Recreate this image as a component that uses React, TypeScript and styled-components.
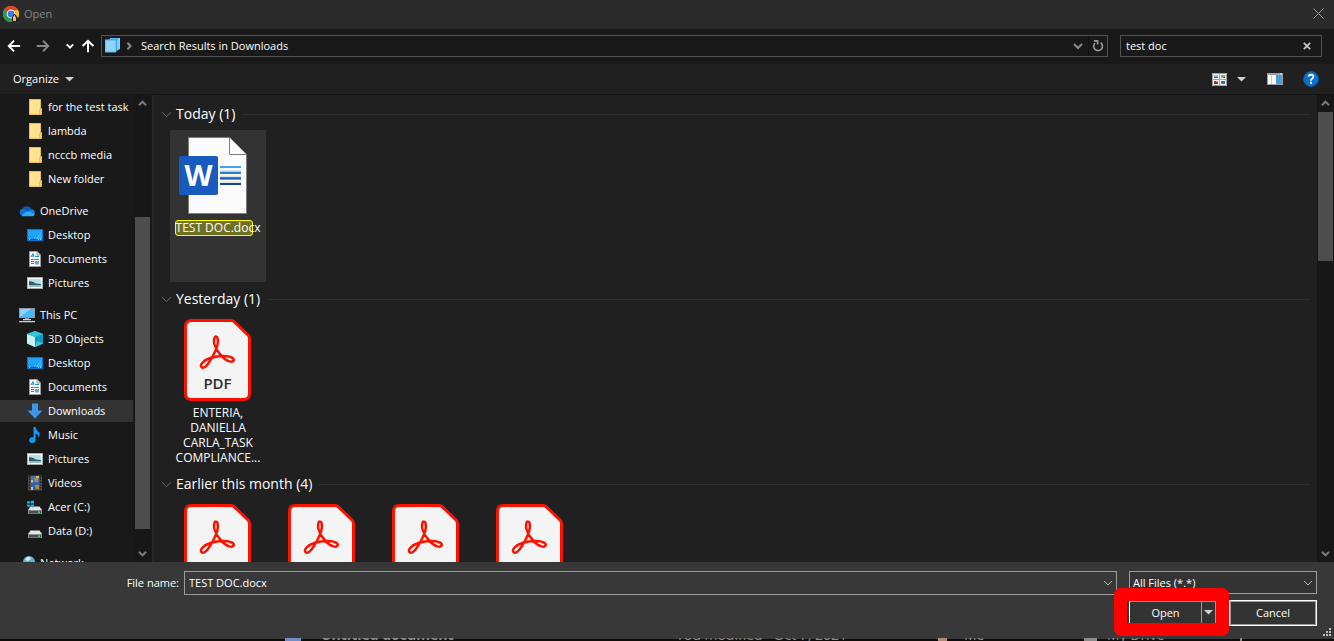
import React from "react";
import styled, { createGlobalStyle } from "styled-components";

const GlobalStyle = createGlobalStyle`
  *, *::before, *::after { box-sizing: border-box; }
  html, body { margin: 0; padding: 0; background: #0e0e0e; }
  body, button, input, select {
    font-family: "Open Sans", "Noto Sans", sans-serif;
    font-size: 11px;
    line-height: 16px;
    color: #ffffff;
  }
  button { margin: 0; padding: 0; border: 0; background: none; cursor: pointer; }
  input, select { margin: 0; border: 0; background: none; outline: none; min-width: 0; }
  svg { display: block; flex: none; }
`;

/* ---------- window frame ---------- */

const Dialog = styled.main`
  display: flex;
  flex-direction: column;
  height: 100vh;
  overflow: hidden;
`;

const TitleBar = styled.header`
  display: flex;
  align-items: center;
  flex: none;
  gap: 5px;
  height: 29px;
  padding: 0 10px 2px 3px;
  background: #2b2b2b;
`;

const Title = styled.h1`
  flex: 1;
  margin: 0;
  font-size: 11px;
  font-weight: 400;
  color: #858585;
`;

const IconButton = styled.button<{ $width?: number }>`
  display: flex;
  align-items: center;
  justify-content: center;
  flex: none;
  width: ${(p) => p.$width ?? 16}px;
  height: 20px;
`;

const NavBar = styled.nav`
  display: flex;
  align-items: center;
  flex: none;
  height: 35px;
  padding: 0 12px 2px 6px;
  background: #191919;
`;

const NavButtons = styled.div`
  display: flex;
  align-items: center;
  justify-content: space-between;
  width: 89px;
  margin-right: 6px;
`;

const FieldBox = styled.div<{ $width?: string }>`
  display: flex;
  align-items: center;
  flex: ${(p) => (p.$width ? `0 0 ${p.$width}` : "1")};
  min-width: 0;
  height: 22px;
  border: 1px solid #535353;
`;

const AddressBox = styled(FieldBox)`
  margin-right: 12px;
  padding: 0 0 0 3px;
`;

const Crumb = styled.a`
  flex: 1;
  margin-left: 8px;
  color: #ffffff;
  text-decoration: none;
`;

const CrumbArrow = styled.span`
  display: flex;
  margin-left: 5px;
`;

const FieldDivider = styled.span`
  width: 1px;
  height: 20px;
  background: #121212;
`;

const SearchInput = styled.input`
  flex: 1;
  padding: 0 0 0 5px;
`;

const Toolbar = styled.div`
  display: flex;
  align-items: center;
  flex: none;
  height: 31px;
  padding: 0 15px 0 13px;
  background: #202020;
  border-bottom: 1px solid #151515;
`;

const OrganizeButton = styled.button`
  display: flex;
  align-items: center;
  gap: 6px;
  margin-right: auto;
`;

const ToolbarGroup = styled.div<{ $after?: number }>`
  display: flex;
  align-items: center;
  gap: 6px;
  margin-right: ${(p) => p.$after ?? 0}px;
`;

const Body = styled.div`
  display: flex;
  flex: 1;
  min-height: 0;
`;

/* ---------- navigation tree ---------- */

const Sidebar = styled.aside`
  display: flex;
  flex: none;
  width: 154px;
  padding-right: 1px;
  background: #191919;
  border-right: 2px solid #262626;
`;

const Tree = styled.div`
  flex: 1;
  overflow: hidden;
`;

const TreeSection = styled.ul`
  margin: 0 0 8px;
  padding: 0;
  list-style: none;
`;

const TreeItem = styled.li`
  padding: 1px 0;
`;

const TreeLink = styled.a<{ $level: number; $active?: boolean }>`
  display: flex;
  align-items: center;
  gap: 5px;
  height: 22px;
  margin-right: 1px;
  padding-left: ${(p) => 19 + p.$level * 8}px;
  color: #ffffff;
  text-decoration: none;
  white-space: nowrap;
  background: ${(p) => (p.$active ? "#333333" : "transparent")};
`;

/* ---------- scroll bars ---------- */

const ScrollTrack = styled.div`
  display: flex;
  flex-direction: column;
  flex: none;
  width: 17px;
  padding: 0 1px;
  background: #171717;
`;

const ScrollArrow = styled.button`
  display: flex;
  align-items: center;
  justify-content: center;
  flex: none;
  height: 17px;
`;

const ScrollSpace = styled.div<{ $share: number }>`
  flex: ${(p) => p.$share} 0 0;
`;

const ScrollThumb = styled(ScrollSpace)`
  background: #4d4d4d;
`;

/* ---------- file list ---------- */

const Content = styled.section`
  flex: 1;
  min-width: 0;
  overflow: hidden;
  padding: 3px 7px 0;
  background: #202020;
`;

const Group = styled.section`
  margin-bottom: 1px;
`;

const GroupHeader = styled.h2`
  display: flex;
  align-items: center;
  gap: 4px;
  height: 32px;
  margin: 0;
  font-size: 14px;
  line-height: 20px;
  font-weight: 400;
  white-space: nowrap;

  &::after {
    content: "";
    flex: 1;
    height: 1px;
    margin-left: 3px;
    background: #2e2e2e;
  }
`;

const Tiles = styled.div`
  display: flex;
  gap: 8px;
  padding-left: 9px;
`;

const Tile = styled.button<{ $selected?: boolean }>`
  position: relative;
  display: flex;
  flex-direction: column;
  align-items: center;
  flex: none;
  width: 96px;
  height: 152px;
  padding-top: 4px;
  background: ${(p) => (p.$selected ? "#333333" : "transparent")};
`;

const TileLabel = styled.span`
  position: relative;
  width: 88px;
  font-size: 12px;
  line-height: 15px;
  text-align: center;
`;

const NameMark = styled.span`
  position: absolute;
  left: 5px;
  top: 90px;
  width: 78px;
  height: 16px;
  border: 1px solid #ffff00;
  border-radius: 3px;
  background: #707022;
`;

/* ---------- footer ---------- */

const Footer = styled.footer`
  display: grid;
  grid-template-columns: 184px 1fr 188px;
  grid-template-rows: 24px 26px;
  row-gap: 5px;
  flex: none;
  height: 76px;
  padding: 9px 17px 0 0;
  background: #383838;
  position: relative;
`;

const FileNameLabel = styled.label`
  padding: 4px 5px 0 0;
  text-align: right;
`;

const FileNameBox = styled.div`
  display: flex;
  align-items: center;
  margin-right: 12px;
  border: 1px solid #9b9b9b;
`;

const FileNameInput = styled.input`
  flex: 1;
  padding: 0 0 0 4px;
`;

const FilterBox = styled.div`
  display: grid;
  grid-template-columns: 1fr 17px;
  align-items: center;
  height: 23px;
  border: 1px solid #9b9b9b;
  background: #333333;
`;

const FilterSelect = styled.select`
  grid-area: 1 / 1 / 2 / 3;
  height: 21px;
  padding: 0 17px 0 3px;
  appearance: none;
`;

const FilterArrow = styled.span`
  grid-area: 1 / 2;
  display: flex;
  justify-content: center;
  pointer-events: none;
`;

const Actions = styled.div`
  grid-column: 3;
  display: flex;
  justify-content: space-between;
`;

const OpenSplit = styled.div`
  position: relative;
  display: flex;
  width: 87px;
  margin: 1px 0 2px;
  border: 1px solid #9b9b9b;
  border-left-color: #ffffff;
  background: #333333;
`;

const OpenButton = styled.button`
  flex: 1;
  border-right: 1px solid #9b9b9b;
`;

const CancelButton = styled.button`
  width: 88px;
  border: 1px solid #ffffff;
  outline: 1px solid #9b9b9b;
  outline-offset: -2px;
  background: #333333;
`;

const RedFrame = styled.span`
  position: absolute;
  inset: -14px -14px -13px -16px;
  border: 13px solid #ff0000;
  border-radius: 7px;
  pointer-events: none;
`;

const Grip = styled.span`
  position: absolute;
  right: 3px;
  bottom: 2px;
`;

/* ---------- page showing under the dialog ---------- */

const Underlay = styled.div`
  display: grid;
  grid-template-columns: 36px 355px 262px 26px 120px 23px 133px 1fr;
  grid-template-rows: 3px;
  align-items: end;
  flex: none;
  height: 3px;
  padding-left: 285px;
  overflow: hidden;
  font-size: 14px;
  line-height: 12px;
  white-space: nowrap;
  color: #8c8c8c;
  background: linear-gradient(#383838 1px, #0e0b0b 1px);
`;

const UnderlayChip = styled.span<{ $color: string; $size: number }>`
  width: ${(p) => p.$size}px;
  height: 3px;
  background: ${(p) => p.$color};
`;

/* ---------- icons ---------- */

const ChromeIcon = () => (
  <svg width="16" height="16" viewBox="0 0 16 16">
    <circle cx="8" cy="8" r="8" fill="#fbc116" />
    <path d="M8 8 L1.1 4 A8 8 0 0 1 14.9 4 Z" fill="#e33b2e" />
    <path d="M8 8 L1.1 4 A8 8 0 0 0 8 16 L11 9.5 Z" fill="#1f9d4d" />
    <path d="M8 4.2 H15 A8 8 0 0 1 8 16 L11.4 9.8 Z" fill="#fbc116" />
    <circle cx="8" cy="8" r="4.4" fill="#fff" />
    <circle cx="8" cy="8" r="3.4" fill="#3b7de8" />
    <path d="M8.5 16 L9 11 Q11 6 13 9 L16 14 V16 Z" fill="#2b2223" />
    <path d="M10 15 V11 L11.5 9 L13 12 V15 Z" fill="#e8b79c" />
  </svg>
);

const CloseIcon = () => (
  <svg width="11" height="11" viewBox="0 0 11 11" stroke="#9a9a9a" fill="none">
    <path d="M.5 .5 L10.5 10.5 M10.5 .5 L.5 10.5" />
  </svg>
);

const ArrowIcon = ({ dir, color }: { dir: "left" | "right" | "up"; color: string }) => {
  const turn = { left: 0, up: 90, right: 180 }[dir];
  return (
    <svg width="14" height="14" viewBox="0 0 14 14" stroke={color} strokeWidth="2" fill="none">
      <g transform={`rotate(${turn} 7 7)`}>
        <path d="M1.8 7 H13.2 M7 1.6 L1.8 7 L7 12.4" />
      </g>
    </svg>
  );
};

const Chevron = ({
  dir = "down",
  w = 8,
  color,
  stroke = 2,
}: {
  dir?: "down" | "up" | "right";
  w?: number;
  color: string;
  stroke?: number;
}) => (
  <svg width={w + 2} height={w + 2} viewBox="0 0 10 10" stroke={color} fill="none" strokeWidth={(stroke * 10) / (w + 2)}>
    <path d={{ down: "M1 3 L5 7 L9 3", up: "M1 7 L5 3 L9 7", right: "M3 1 L7 5 L3 9" }[dir]} />
  </svg>
);

const Triangle = () => (
  <svg width="9" height="5" viewBox="0 0 9 5" fill="#d0d0d0">
    <path d="M0 0 H9 L4.5 4.6 Z" />
  </svg>
);

const StackIcon = () => (
  <svg width="15" height="15" viewBox="0 0 15 15">
    <path d="M5 0 H15 V11 L13 12 V1 H5 Z" fill="#8ad6fb" />
    <path d="M3 1 H13 V12.5 H11 V2 H3 Z" fill="#249be8" />
    <path d="M5 0 H14 V11 H5 Z" fill="#5cbcf5" />
    <path d="M3 1 H12.5 V12.5 H3 Z" fill="#2f9fe6" />
    <path d="M12.5 1.5 V12 M14 .5 V11" stroke="#9addff" strokeWidth=".7" />
    <path d="M0 2 H11 V14 H0 Z" fill="#8fd5fb" stroke="#55b4ec" />
  </svg>
);

const RefreshIcon = () => (
  <svg width="12" height="12" viewBox="0 0 12 12" fill="none" stroke="#9a9a9a" strokeWidth="1.6">
    <path d="M8.6 2.6 A4.4 4.4 0 1 1 3 3" />
    <path d="M2 .9 H5.6 V4.6" />
  </svg>
);

const ClearIcon = () => (
  <svg width="8" height="8" viewBox="0 0 8 8" fill="none" stroke="#c4c4c4" strokeWidth="1.8">
    <path d="M.8 .8 L7.2 7.2 M7.2 .8 L.8 7.2" />
  </svg>
);

const ViewIcon = () => (
  <svg width="15" height="13" viewBox="0 0 15 13">
    <rect width="15" height="13" fill="#f2f2f2" />
    <path d="M.5 .5 H14.5 V12.5 H.5 Z M7.5 0 V13 M0 6.5 H15" stroke="#a5a5a5" fill="none" />
    <path d="M2 2 H6 V5 H2 Z" fill="#8ec0e8" />
    <path d="M2 4 H6 V5 H2 Z" fill="#3c6f8e" />
    <path d="M9 2 H13 V5 H9 Z" fill="#8fae9a" />
    <path d="M11 4 H13 V5 H11 Z" fill="#3f7a3a" />
    <path d="M2 8 H6 V11 H2 Z" fill="#c0281a" />
    <path d="M4 8 H6 V9 H4 Z" fill="#eaa13b" />
    <path d="M9 8 H13 V11 H9 Z" fill="#3c69a4" />
    <path d="M9 10 H13 V11 H9 Z" fill="#8a7d2a" />
  </svg>
);

const PaneIcon = () => (
  <svg width="16" height="12" viewBox="0 0 16 12">
    <rect width="16" height="12" fill="#9c9c9c" />
    <path d="M1 2 H4.5 V11 H1 Z M5 2 H9 V11 H5 Z" fill="#fff" />
    <path d="M9 2 H15 V11 H9 Z" fill="#3f9fe8" />
    <path d="M11 .5 H12 V1.5 H11 Z M13 .5 H15 V1.5 H13 Z" fill="#eee" />
  </svg>
);

const HelpIcon = () => (
  <svg width="16" height="16" viewBox="0 0 16 16">
    <circle cx="8" cy="8" r="7.5" fill="#0a6fd1" stroke="#0b559c" />
    <path d="M5.6 5.6 Q5.8 3.7 8 3.7 Q10.4 3.8 10.4 5.8 Q10.4 7 9 7.8 Q8 8.4 8 9.7" fill="none" stroke="#fff" strokeWidth="1.8" />
    <rect x="7" y="10.8" width="2" height="2" fill="#fff" />
  </svg>
);

type IconName =
  | "folder" | "cloud" | "desktop" | "document" | "picture" | "pc" | "cube"
  | "download" | "music" | "video" | "system" | "drive" | "network";

const driveShape = (
  <>
    <path d="M3.5 7.5 H12.5 L15 11 H1 Z" fill="#e6e6e6" />
    <path d="M1 11 H15 V15 H1 Z" fill="#8b8f92" />
    <path d="M2 12 H14 V14.4 H2 Z" fill="#4a4e50" />
    <rect x="11" y="12.4" width="2" height="1.6" fill="#3fe05a" />
  </>
);

const treeIcons: Record<IconName, React.ReactNode> = {
  folder: (
    <>
      <path d="M2 .5 H13.5 V15.5 H2 Z" fill="#ffe391" />
      <path d="M2.5 .5 V15.5 H14.5 V9.5 H13.5 V.5 Z" fill="none" stroke="#e9c04b" />
      <path d="M12.5 10 H14.5 V15 H12.5 Z" fill="#f7d56b" stroke="#e0b13c" strokeWidth=".6" />
    </>
  ),
  cloud: (
    <>
      <path d="M3.2 7 A4.8 4.8 0 0 1 12.4 6.4 L9 10 Z" fill="#0a5fb4" />
      <path d="M4 13 A3.4 3.4 0 1 1 4.6 5.8 L12 11 Z" fill="#1173cc" />
      <path d="M11.8 6.4 A3.4 3.4 0 0 1 15.4 11.4 L9 9.4 Z" fill="#1683d8" />
      <path d="M3 13.2 Q2.4 11.2 7.6 8.7 Q9.4 7.8 11.6 9.2 L15.6 11 Q15.6 13.2 13.2 13.2 Z" fill="#29a8ef" />
    </>
  ),
  desktop: (
    <>
      <rect x=".5" y="2.5" width="15" height="11" fill="#1ea2ff" stroke="#0a78c8" />
      <path d="M6 13 L15 4 V13 Z" fill="#2fb0ff" />
      <path d="M1 12.5 H15" stroke="#0c4d80" />
      <path d="M2 12.5 H3 M11 12.5 H12 M13 12.5 H14" stroke="#fff" />
    </>
  ),
  document: (
    <>
      <path d="M2.5 .5 H10 L13.5 4 V15.5 H2.5 Z" fill="#fafafa" stroke="#9c9c9c" />
      <path d="M10 .5 V4 H13.5" fill="#ddd" stroke="#9c9c9c" />
      <path d="M4 6 L6 2.5 L7 6 M4.5 5 H7 M8 5.5 H12" fill="none" stroke="#2b8fd6" />
      <path d="M4 8.5 H12 M4 10.5 H7 M4 12.5 H7" stroke="#2b8fd6" />
      <rect x="8" y="10" width="4" height="3.5" fill="#7c9cb8" />
    </>
  ),
  picture: (
    <>
      <rect x=".5" y="2.5" width="15" height="11" fill="#fff" stroke="#a9a9a9" />
      <rect x="2" y="4" width="12" height="8" fill="#b9dcf2" />
      <path d="M2 6 Q6 6 9 8.5 L14 9 V10.5 H2 Z" fill="#2f5f66" />
      <path d="M2 10 H14 V12 H2 Z" fill="#8fbcd0" />
    </>
  ),
  pc: (
    <>
      <rect x=".5" y="1.5" width="15" height="9" fill="#4bb8fb" stroke="#8c9aa5" />
      <path d="M1 10 L12 2 H1 Z" fill="#8bd3ff" />
      <path d="M6 11 H10 V12.4 H6 Z" fill="#7d8890" />
      <path d="M4 12.6 H12 M0 14.6 H16" stroke="#c9d3db" strokeWidth="1.4" />
    </>
  ),
  cube: (
    <>
      <path d="M8 0 L16 3 V12.6 L8 16 L0 12.6 V3 Z" fill="#25b4cf" />
      <path d="M0 3 L8 6 V16 L0 12.6 Z" fill="#c9f1f3" />
      <path d="M0 3 L8 0 L16 3 L8 6 Z" fill="#3cc7d8" />
      <path d="M8 6 L16 3 V12.6 L8 16 Z" fill="#0b9ec4" />
      <path d="M8 16 L16 12.6 L10 10 Z" fill="#35d0dc" />
    </>
  ),
  download: <path d="M5 .5 H11 V7.5 H15.5 L8 15.5 L.5 7.5 H5 Z" fill="#3b97ea" />,
  music: (
    <path d="M6.5 0 H8.6 Q9 3 11.6 5 Q13.6 7.4 11.4 11 Q11.6 7.4 8.6 6.8 V13 A3.3 2.8 -15 1 1 6.5 10.4 Z" fill="#0f9bf5" />
  ),
  video: (
    <>
      <rect x="1" y=".5" width="14" height="15" fill="#55504a" />
      <path d="M2.5 1 V15.5 M13.5 1 V15.5" stroke="#1c1c1c" strokeWidth="1.4" strokeDasharray="1.4 1.4" />
      <rect x="4" y="1" width="8" height="6.6" fill="#3c72c8" />
      <rect x="4" y="8.4" width="8" height="6.6" fill="#3463b6" />
      <path d="M7 3 H11 V7 H8 Z M8 10 H12 V14 H9 Z" fill="#b38a3c" />
      <path d="M9 1 H12 V3 H9 Z" fill="#d8c13b" />
      <path d="M4 5 H6 V7.6 H4 Z M4 12 H6 V15 H4 Z" fill="#9fc3ea" />
    </>
  ),
  system: (
    <>
      {driveShape}
      <path d="M0 2.4 L2.8 2 V4.6 H0 Z M3.6 1.9 L7 1.4 V4.6 H3.6 Z M0 5.4 H2.8 V8 L0 7.6 Z M3.6 5.4 H7 V8.6 L3.6 8.1 Z" fill="#12b4f2" />
    </>
  ),
  drive: driveShape,
  network: (
    <>
      <circle cx="10" cy="7" r="6" fill="#5fb2da" />
      <path d="M6 4 Q9 .5 12 3 Q11 6 8 6 Z" fill="#d3ecf6" />
      <path d="M0 7 H8 V12 H0 Z" fill="#2f8ac0" />
    </>
  ),
};

const TreeIcon = ({ name }: { name: IconName }) => (
  <svg width="16" height="16" viewBox="0 0 16 16">{treeIcons[name]}</svg>
);

const WordIcon = () => (
  <svg width="80" height="86" viewBox="0 0 80 86">
    <path d="M10.5 3.5 H51 L68.5 20.5 V79.5 H10.5 Z" fill="#fbfbfb" stroke="#7f7f7f" />
    <path d="M51.5 3.5 V20.5 H68.5" fill="#fbfbfb" stroke="#7f7f7f" />
    <rect x="1" y="22" width="39" height="39" rx="2" fill="#185abd" />
    <path d="M42 33 H63" stroke="#41a5ee" strokeWidth="2" />
    <path d="M42 38.8 H63" stroke="#2b7cd3" strokeWidth="2.4" />
    <path d="M42 44.4 H63" stroke="#185abd" strokeWidth="2.4" />
    <path d="M42 50 H63" stroke="#103f91" strokeWidth="2" />
    <path d="M42 36.8 H63 M42 42.4 H63 M42 48 H63" stroke="#c9daee" />
    <text x="20.5" y="52" textAnchor="middle" fontFamily="Open Sans" fontWeight="700" fontSize="29" fill="#fff">W</text>
  </svg>
);

const PdfIcon = () => (
  <svg width="80" height="86" viewBox="0 0 80 86">
    <path
      d="M13.5 1.5 H53.5 Q55 1.5 56.5 3 L70 16 Q71.5 17.5 71.5 19.5 V74.5 Q71.5 80.5 65.5 80.5 H13.5 Q7.5 80.5 7.5 74.5 V7.5 Q7.5 1.5 13.5 1.5 Z"
      fill="#f4f4f4" stroke="#ff1100" strokeWidth="3"
    />
    <path
      d="M24 48.6 C20.5 46 26 41 33 38.8 C41 36.6 50 36.4 54 38.6 C57.5 41 55.5 43.4 51.5 42.4 C45 40.6 38.4 32 36.4 25 C35 18 38 16 39.4 18.8 C41 23 39.2 29 35.4 36 C31 44 27.4 50 24 48.6 Z"
      fill="none" stroke="#ff1100" strokeWidth="2.5"
    />
    <text x="39.5" y="70" textAnchor="middle" fontFamily="Open Sans" fontWeight="600" fontSize="15" fill="#2d2d2d">PDF</text>
  </svg>
);

const GripIcon = () => (
  <svg width="8" height="8" viewBox="0 0 8 8" fill="#bdbdbd">
    <path d="M6 0h2v2h-2z M3 3h2v2h-2z M6 3h2v2h-2z M0 6h2v2h-2z M3 6h2v2h-2z M6 6h2v2h-2z" />
  </svg>
);

/* ---------- data ---------- */

type Node = { label: string; icon: IconName; level: number; active?: boolean };

const tree: Node[][] = [
  [
    { label: "for the test task", icon: "folder", level: 1 },
    { label: "lambda", icon: "folder", level: 1 },
    { label: "ncccb media", icon: "folder", level: 1 },
    { label: "New folder", icon: "folder", level: 1 },
  ],
  [
    { label: "OneDrive", icon: "cloud", level: 0 },
    { label: "Desktop", icon: "desktop", level: 1 },
    { label: "Documents", icon: "document", level: 1 },
    { label: "Pictures", icon: "picture", level: 1 },
  ],
  [
    { label: "This PC", icon: "pc", level: 0 },
    { label: "3D Objects", icon: "cube", level: 1 },
    { label: "Desktop", icon: "desktop", level: 1 },
    { label: "Documents", icon: "document", level: 1 },
    { label: "Downloads", icon: "download", level: 1, active: true },
    { label: "Music", icon: "music", level: 1 },
    { label: "Pictures", icon: "picture", level: 1 },
    { label: "Videos", icon: "video", level: 1 },
    { label: "Acer (C:)", icon: "system", level: 1 },
    { label: "Data (D:)", icon: "drive", level: 1 },
  ],
  [{ label: "Network", icon: "network", level: 0 }],
];

type FileEntry = { name: string; kind: "word" | "pdf"; selected?: boolean };

const groups: { title: string; files: FileEntry[] }[] = [
  { title: "Today (1)", files: [{ name: "TEST DOC.docx", kind: "word", selected: true }] },
  { title: "Yesterday (1)", files: [{ name: "ENTERIA, DANIELLA CARLA_TASK COMPLIANCE...", kind: "pdf" }] },
  {
    title: "Earlier this month (4)",
    files: [
      { name: "", kind: "pdf" },
      { name: "", kind: "pdf" },
      { name: "", kind: "pdf" },
      { name: "", kind: "pdf" },
    ],
  },
];

const ScrollBar = ({ before, thumb, after }: { before: number; thumb: number; after: number }) => (
  <ScrollTrack>
    <ScrollArrow aria-label="Scroll up"><Chevron dir="up" w={7} color="#7a7a7a" /></ScrollArrow>
    <ScrollSpace $share={before} />
    <ScrollThumb $share={thumb} />
    <ScrollSpace $share={after} />
    <ScrollArrow aria-label="Scroll down"><Chevron w={7} color="#7a7a7a" /></ScrollArrow>
  </ScrollTrack>
);

export default function App() {
  return (
    <Dialog>
      <GlobalStyle />
      <TitleBar>
        <ChromeIcon />
        <Title>Open</Title>
        <IconButton $width={11} aria-label="Close"><CloseIcon /></IconButton>
      </TitleBar>

      <NavBar>
        <NavButtons>
          <IconButton aria-label="Back"><ArrowIcon dir="left" color="#ffffff" /></IconButton>
          <IconButton $width={32} aria-label="Forward"><ArrowIcon dir="right" color="#8a8a8a" /></IconButton>
          <IconButton $width={12} aria-label="Recent locations"><Chevron w={6} color="#ffffff" /></IconButton>
          <IconButton $width={14} aria-label="Up"><ArrowIcon dir="up" color="#ffffff" /></IconButton>
        </NavButtons>
        <AddressBox>
          <StackIcon />
          <CrumbArrow><Chevron dir="right" w={6} color="#8a8a8a" stroke={2} /></CrumbArrow>
          <Crumb href="#results">Search Results in Downloads</Crumb>
          <IconButton $width={20} aria-label="Previous locations"><Chevron color="#8a8a8a" /></IconButton>
          <FieldDivider />
          <IconButton $width={18} aria-label="Refresh"><RefreshIcon /></IconButton>
        </AddressBox>
        <FieldBox $width="202px">
          <SearchInput aria-label="Search" defaultValue="test doc" />
          <IconButton $width={28} aria-label="Clear search"><ClearIcon /></IconButton>
        </FieldBox>
      </NavBar>

      <Toolbar>
        <OrganizeButton>Organize <Triangle /></OrganizeButton>
        <ToolbarGroup $after={17}>
          <IconButton aria-label="Change view"><ViewIcon /></IconButton>
          <IconButton $width={17} aria-label="More view options"><Triangle /></IconButton>
        </ToolbarGroup>
        <ToolbarGroup $after={20}>
          <IconButton aria-label="Preview pane"><PaneIcon /></IconButton>
        </ToolbarGroup>
        <IconButton aria-label="Help"><HelpIcon /></IconButton>
      </Toolbar>

      <Body>
        <Sidebar>
          <Tree>
            {tree.map((section, i) => (
              <TreeSection key={i}>
                {section.map((node) => (
                  <TreeItem key={node.label}>
                    <TreeLink href="#folder" $level={node.level} $active={node.active}>
                      <TreeIcon name={node.icon} />
                      {node.label}
                    </TreeLink>
                  </TreeItem>
                ))}
              </TreeSection>
            ))}
          </Tree>
          <ScrollBar before={105} thumb={312} after={16} />
        </Sidebar>

        <Content>
          {groups.map((group) => (
            <Group key={group.title}>
              <GroupHeader>
                <Chevron w={9} color="#6e6e6e" stroke={1} />
                {group.title}
              </GroupHeader>
              <Tiles>
                {group.files.map((file, i) => (
                  <Tile key={i} $selected={file.selected}>
                    {file.kind === "word" ? <WordIcon /> : <PdfIcon />}
                    {file.selected && <NameMark />}
                    <TileLabel>{file.name}</TileLabel>
                  </Tile>
                ))}
              </Tiles>
            </Group>
          ))}
        </Content>
        <ScrollBar before={0} thumb={149} after={284} />
      </Body>

      <Footer>
        <FileNameLabel htmlFor="file-name">File name:</FileNameLabel>
        <FileNameBox>
          <FileNameInput id="file-name" defaultValue="TEST DOC.docx" />
          <IconButton aria-label="Recent file names"><Chevron color="#b8b8b8" stroke={1} /></IconButton>
        </FileNameBox>
        <FilterBox>
          <FilterSelect aria-label="File type">
            <option>All Files (*.*)</option>
          </FilterSelect>
          <FilterArrow><Chevron color="#b8b8b8" stroke={1} /></FilterArrow>
        </FilterBox>
        <Actions>
          <OpenSplit>
            <OpenButton>Open</OpenButton>
            <IconButton $width={13} aria-label="Open options"><Triangle /></IconButton>
            <RedFrame />
          </OpenSplit>
          <CancelButton>Cancel</CancelButton>
        </Actions>
        <Grip><GripIcon /></Grip>
      </Footer>

      <Underlay aria-hidden="true">
        <UnderlayChip $color="#6f8fc9" $size={16} />
        <b>Untitled document</b>
        <span>You modified · Oct 7, 2021</span>
        <UnderlayChip $color="#b08a74" $size={9} />
        <span>Me</span>
        <UnderlayChip $color="#8c8c8c" $size={13} />
        <span>My Drive</span>
        <UnderlayChip $color="#8c8c8c" $size={2} />
      </Underlay>
    </Dialog>
  );
}
